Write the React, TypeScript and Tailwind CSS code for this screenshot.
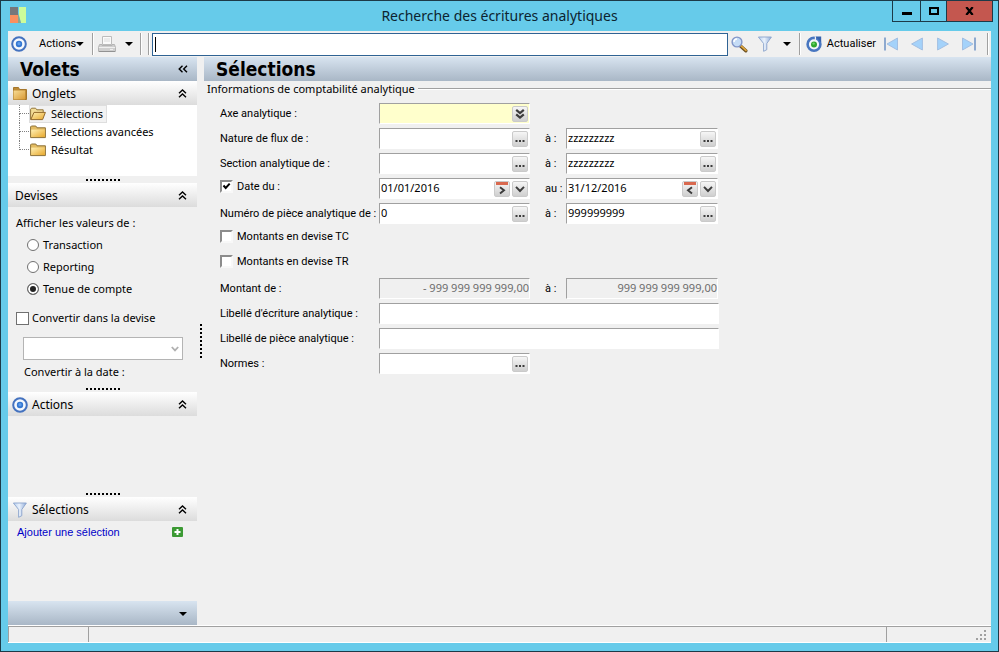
import { useState } from 'react';
import type { ReactNode } from 'react';
import clsx from 'clsx';

// --- Icons --------------------------------------------------------------------

function AppIcon() {
  return (
    <svg width="16" height="16" viewBox="0 0 16 16" aria-hidden="true">
      <rect width="8" height="8" fill="#77777b" />
      <rect y="8" width="8" height="8" fill="#fb8f5f" />
      <path d="M9 0h7v16h-5L9 8z" fill="#cdfc9a" />
      <path d="M8 6l3 10H8z" fill="#8fa58c" />
    </svg>
  );
}

function TargetIcon() {
  return (
    <svg width="16" height="16" viewBox="0 0 16 16" className="shrink-0" aria-hidden="true">
      <circle cx="8" cy="8" r="6.8" fill="#f4f8fd" stroke="#4472bf" strokeWidth="2" />
      <circle cx="8" cy="8" r="3.2" fill="#3477d2" />
      <circle cx="8" cy="7.7" r="1.6" fill="#5f9dea" />
    </svg>
  );
}

function PrinterIcon() {
  return (
    <svg width="18" height="18" viewBox="0 0 18 18" aria-hidden="true">
      <path d="M4.5 1.5h9v8h-9z" fill="#fafafa" stroke="#bcbcbc" />
      <path d="M6 4h6M6 6h6" stroke="#dcdcdc" />
      <path d="M1.5 9.5h2.5v1h10v-1h2.5l1 3v4H.5v-4z" fill="#cfcfcf" stroke="#b4b4b4" />
      <path d="M1 12.5h16" stroke="#f0f0f0" />
      <path d="M1 16.5h16" stroke="#929292" />
      <rect x="12" y="14" width="3" height="1" fill="#eee" />
    </svg>
  );
}

function SearchIcon() {
  return (
    <svg width="17" height="17" viewBox="0 0 17 17" aria-hidden="true">
      <path d="M9.5 10l5.3 4.8" stroke="#6b5022" strokeWidth="3.4" strokeLinecap="round" />
      <path d="M10 9.8l5 4.6" stroke="#e0a63c" strokeWidth="1.6" strokeLinecap="round" />
      <circle cx="6" cy="6" r="4.9" fill="#c5dcf6" stroke="#8296c8" strokeWidth="1.4" />
      <path d="M3 6a3 3 0 013-3" stroke="#fff" strokeWidth="1.5" fill="none" />
    </svg>
  );
}

function FunnelIcon() {
  return (
    <svg width="16" height="16" viewBox="0 0 16 16" className="shrink-0" aria-hidden="true">
      <defs>
        <linearGradient id="funnel" x1="0" x2="1">
          <stop offset="0" stopColor="#b4cdee" />
          <stop offset=".45" stopColor="#eaf2fc" />
          <stop offset="1" stopColor="#8fabd8" />
        </linearGradient>
      </defs>
      <path d="M1.4 1h13L9.8 7.5v6.2l-3.2 1.6V7.5z" fill="url(#funnel)" stroke="#8aa3cc" strokeWidth=".9" />
    </svg>
  );
}

function RefreshIcon() {
  return (
    <svg width="16" height="16" viewBox="0 0 16 16" aria-hidden="true">
      <circle cx="8" cy="8.3" r="6.4" fill="#f2f7fc" stroke="#4876c0" strokeWidth="2.6" />
      <path d="M9.4 0v5.6" stroke="#f0f0f0" strokeWidth="1.2" />
      <path d="M9.4 .4h5.8v5.8z" fill="#3562ad" />
      <circle cx="8" cy="8.4" r="3" fill="#2fa82f" />
      <circle cx="7.6" cy="7.6" r="1.2" fill="#6ad46a" />
    </svg>
  );
}

function NavIcon({ kind }: { kind: 'first' | 'prev' | 'next' | 'last' }) {
  const flip = kind === 'next' || kind === 'last';
  const bar = kind === 'first' || kind === 'last';
  return (
    <svg width="16" height="16" viewBox="0 0 16 16" className={clsx(flip && '-scale-x-100')} aria-hidden="true">
      {bar && <path d="M2 1.5v13" stroke="#8ea9cf" strokeWidth="2" />}
      <path
        d={bar ? 'M14.5 2v12L4 8z' : 'M13.4 2v12L2.6 8z'}
        fill="#a4d2fa"
        stroke="#a3bfe2"
      />
    </svg>
  );
}

function FolderIcon({ open = false }: { open?: boolean }) {
  return (
    <svg width="16" height="14" viewBox="0 0 16 14" className="shrink-0" aria-hidden="true">
      <defs>
        <linearGradient id="folder" x1="0" y1="0" x2="1" y2="1">
          <stop offset="0" stopColor="#fff0b4" />
          <stop offset="1" stopColor="#e8a92e" />
        </linearGradient>
      </defs>
      {open ? (
        <>
          <path d="M.6 12.5V2.2l1-1h4l1.2 1.6h6.4v2.6" fill="#f3dc96" stroke="#93763a" />
          <path d="M.8 12.6L4 5.4h11.4l-2.8 7.2z" fill="url(#folder)" stroke="#93692a" />
        </>
      ) : (
        <>
          <path d="M.6 12.6V1.8l.8-.8h4.4L7 2.8h8.4v9.8z" fill="#e3bc62" stroke="#8d7138" />
          <path d="M1.2 4.6h13.6v7.4H1.2z" fill="url(#folder)" />
        </>
      )}
    </svg>
  );
}

function SectionFolderIcon() {
  return (
    <svg width="16" height="16" viewBox="0 0 16 16" className="shrink-0" aria-hidden="true">
      <defs>
        <linearGradient id="section-folder" x1="0" y1="0" x2="1" y2="1">
          <stop offset="0" stopColor="#f7dc95" />
          <stop offset="1" stopColor="#d99a35" />
        </linearGradient>
      </defs>
      <path d="M1.5 13.5v-12h5l1 2h7v10z" fill="#bd8a35" stroke="#a5762b" />
      <path d="M1.5 4.5h11.6v9H1.5z" fill="url(#section-folder)" />
    </svg>
  );
}

function Caret() {
  return (
    <svg width="8" height="4" viewBox="0 0 8 4" aria-hidden="true">
      <path d="M0 0h8L4 4z" fill="#000" />
    </svg>
  );
}

function CollapseIcon() {
  return (
    <svg width="9" height="9" viewBox="0 0 9 9" fill="none" stroke="#000" strokeWidth="1.4" aria-hidden="true">
      <path d="M1 4.2L4.5 1 8 4.2M1 8.2L4.5 5 8 8.2" />
    </svg>
  );
}

function FieldGlyph({ kind }: { kind: FieldButton }) {
  return (
    <svg width="14" height="14" viewBox="0 0 14 14" fill="none" stroke="#3c3c3c" strokeWidth="1.9" aria-hidden="true">
      {kind === 'browse' && <path d="M2.5 9h2M6 9h2M9.5 9h2" strokeWidth="2" />}
      {kind === 'list' && <path d="M3.2 2.8L7 6l3.8-3.2M3.2 7.3L7 10.5l3.8-3.2" strokeWidth="2.2" />}
      {kind === 'drop' && <path d="M3 4.8L7 9l4-4.2" />}
      {kind === 'from' && <path d="M5 5.2L9 8.2 5 11.4" />}
      {kind === 'to' && <path d="M9 5.2L5 8.2l4 3.2" />}
      {(kind === 'from' || kind === 'to') && <path d="M1 1.5h12" stroke="#d9694f" strokeWidth="3" />}
    </svg>
  );
}

// --- Small parts --------------------------------------------------------------

type FieldButton = 'browse' | 'list' | 'drop' | 'from' | 'to';

const buttonTitles: Record<FieldButton, string> = {
  browse: 'Parcourir',
  list: 'Liste',
  drop: 'Calendrier',
  from: 'Date suivante',
  to: 'Date précédente',
};

interface FieldProps {
  id: string;
  label?: string;
  value?: string;
  buttons?: FieldButton[];
  required?: boolean;
  disabled?: boolean;
  className?: string;
}

function Field({ id, label, value = '', buttons = [], required, disabled, className }: FieldProps) {
  return (
    <div
      className={clsx(
        'flex h-[21px] min-w-0 items-center gap-[2px] border border-r-white border-b-white border-t-[#a0a0a0] border-l-[#a0a0a0]',
        buttons.length > 0 && 'pr-px',
        required ? 'bg-[#ffffcc]' : disabled ? 'bg-[#f0f0f0]' : 'bg-white',
        className,
      )}
    >
      <input
        id={id}
        type="text"
        aria-label={label}
        defaultValue={value}
        disabled={disabled}
        className={clsx(
          'h-full w-full min-w-0 flex-1 bg-transparent pb-[3px] pl-px font-["Noto_Sans",sans-serif] text-[11px] outline-none',
          disabled && 'text-right text-[#6d6d6d]',
        )}
      />
      {buttons.map(kind => (
        <button
          key={kind}
          type="button"
          title={buttonTitles[kind]}
          className="flex size-4 shrink-0 items-center justify-center rounded-[2px] border border-[#cacaca] bg-linear-to-b from-[#f6f6f6] to-[#cfcfcf]"
        >
          <FieldGlyph kind={kind} />
        </button>
      ))}
    </div>
  );
}

function FormCheck({ label, defaultChecked }: { label: string; defaultChecked?: boolean }) {
  return (
    <label className="flex items-start gap-1 pt-[2px] leading-[14px]">
      <span className="relative size-[13px] shrink-0">
        <input
          type="checkbox"
          defaultChecked={defaultChecked}
          className="peer block size-[13px] appearance-none border-2 border-t-[#8c8c8c] border-r-[#f8f8f8] border-b-[#f8f8f8] border-l-[#8c8c8c] bg-white"
        />
        <svg
          viewBox="0 0 13 13"
          className="pointer-events-none absolute inset-0 hidden peer-checked:block"
          aria-hidden="true"
        >
          <path d="M3.5 5.5L5.7 8l4-4.4" stroke="#000" strokeWidth="2" fill="none" />
        </svg>
      </span>
      {label}
    </label>
  );
}

function Dots({ vertical = false }: { vertical?: boolean }) {
  return (
    <div className={clsx('flex gap-[2px]', vertical && 'flex-col')}>
      {Array.from({ length: 9 }, (_, i) => (
        <span key={i} className="size-[2px] bg-black" />
      ))}
    </div>
  );
}

function Grip() {
  return (
    <div className="flex h-[7px] items-center justify-center">
      <Dots />
    </div>
  );
}

function PanelHeader({ title, icon }: { title: string; icon?: ReactNode }) {
  return (
    <h2 className="flex h-6 items-center bg-linear-to-b from-white to-[#dcdcdc] pt-px pl-1 pr-[10px] text-xs">
      {icon}
      <span className={clsx('flex-1', icon ? 'pl-1' : 'pl-[3px]')}>{title}</span>
      <button type="button" title="Réduire">
        <CollapseIcon />
      </button>
    </h2>
  );
}

function Separator() {
  return <div className="h-[22px] w-[2px] shrink-0 border-r border-l border-l-[#a0a0a0] border-r-white" />;
}

// --- Sidebar ------------------------------------------------------------------

const tabs = ['Sélections', 'Sélections avancées', 'Résultat'];
const currencies = ['Transaction', 'Reporting', 'Tenue de compte'];

function Sidebar() {
  const [tab, setTab] = useState(tabs[0]);
  const [currency, setCurrency] = useState('Tenue de compte');

  return (
    <aside className="flex w-[189px] shrink-0 flex-col font-['Noto_Sans',sans-serif] text-[11px]">
      <div className="flex h-6 items-center justify-between bg-linear-to-b from-[#d8e4f0] to-[#a9b7c6] pl-3 pr-[9px]">
        <h1 className="font-['DejaVu_Sans_Condensed','DejaVu_Sans',sans-serif] text-[19px] font-bold leading-6">
          Volets
        </h1>
        <button type="button" title="Masquer les volets">
          <svg width="10" height="8" viewBox="0 0 10 8" fill="none" stroke="#000" strokeWidth="1.4" aria-hidden="true">
            <path d="M4.5 .8L1.2 4l3.3 3.2M9 .8L5.7 4 9 7.2" />
          </svg>
        </button>
      </div>

      <PanelHeader title="Onglets" icon={<SectionFolderIcon />} />
      <ul className="bg-white pb-[17px] pl-[11px]">
        {tabs.map((t, i) => (
          <li key={t} className="flex h-[18px]">
            <span className="flex w-[10px] flex-col">
              <span className="h-[9px] border-b border-l border-dotted border-[#808080]" />
              <span className={clsx('h-[9px]', i < tabs.length - 1 && 'border-l border-dotted border-[#808080]')} />
            </span>
            <button
              type="button"
              onClick={() => setTab(t)}
              className={clsx(
                'flex items-center gap-[5px] border pr-[3px] leading-4',
                t === tab ? 'border-[#dedede] bg-[#f2f2f2]' : 'border-transparent',
              )}
            >
              <FolderIcon open={t === tab} />
              {t}
            </button>
          </li>
        ))}
      </ul>
      <Grip />

      <PanelHeader title="Devises" />
      <div className="flex flex-col pt-[7px] pb-1 pl-2 leading-[18px]">
        <p>Afficher les valeurs de :</p>
        <div className="mt-1 flex flex-col gap-1 pl-[11px]">
          {currencies.map(c => (
            <label key={c} className="flex items-center gap-1">
              <input
                type="radio"
                name="currency"
                checked={currency === c}
                onChange={() => setCurrency(c)}
                className="size-3 appearance-none rounded-full border border-[#707070] bg-white checked:bg-[#222] checked:shadow-[inset_0_0_0_2px_#fff]"
              />
              {c}
            </label>
          ))}
        </div>
        <label className="mt-[11px] flex items-center gap-[3px]">
          <input type="checkbox" className="size-[13px] appearance-none border border-[#707070] bg-white checked:bg-[#444]" />
          Convertir dans la devise
        </label>
        <div className="relative mt-[10px] mr-[14px] ml-[7px]">
          <select
            disabled
            aria-label="Devise de conversion"
            className="block h-[23px] w-full appearance-none border border-[#b4b4b4] bg-white"
          />
          <svg
            width="8"
            height="6"
            viewBox="0 0 8 6"
            className="pointer-events-none absolute top-[9px] right-1"
            aria-hidden="true"
          >
            <path d="M.8 1L4 4.4 7.2 1" stroke="#b0b0b0" strokeWidth="1.8" fill="none" />
          </svg>
        </div>
        <p className="mt-[3px] pl-2">Convertir à la date :</p>
      </div>
      <Grip />

      <PanelHeader title="Actions" icon={<TargetIcon />} />
      <div className="h-[74px]" />
      <Grip />

      <PanelHeader title="Sélections" icon={<FunnelIcon />} />
      <div className="flex h-[22px] items-center justify-between pl-[9px] pr-[14px]">
        <a href="#selection" className="font-['Liberation_Sans',Arial,sans-serif] text-[11px] text-[#0000c8]">
          Ajouter une sélection
        </a>
        <button type="button" title="Ajouter">
          <svg width="11" height="10" viewBox="0 0 11 10" aria-hidden="true">
            <rect width="11" height="10" rx="1" fill="#3c9a34" />
            <path d="M5.5 2v6M2.5 5h6" stroke="#fff" strokeWidth="2" />
          </svg>
        </button>
      </div>

      <div className="mt-auto flex h-6 items-center justify-end bg-linear-to-b from-[#d8e4f0] to-[#a9b7c6] pt-[2px] pr-[10px]">
        <button type="button" title="Plus de volets">
          <Caret />
        </button>
      </div>
    </aside>
  );
}

// --- Selection form -----------------------------------------------------------

function SelectionForm() {
  return (
    <form className="grid grid-cols-[159px_151px_36px_152px_1px] gap-y-[3px] pl-4 font-[Roboto,sans-serif] text-[11px] leading-[22px]">
      <label htmlFor="axe">Axe analytique :</label>
      <Field id="axe" required buttons={['list']} />

      <label htmlFor="flux-de" className="col-start-1">Nature de flux de :</label>
      <Field id="flux-de" buttons={['browse']} />
      <label htmlFor="flux-a" className="pl-[15px]">à :</label>
      <Field id="flux-a" value="zzzzzzzzz" buttons={['browse']} />

      <label htmlFor="section-de" className="col-start-1">Section analytique de :</label>
      <Field id="section-de" buttons={['browse']} />
      <label htmlFor="section-a" className="pl-[15px]">à :</label>
      <Field id="section-a" value="zzzzzzzzz" buttons={['browse']} />

      <div className="col-start-1">
        <FormCheck label="Date du :" defaultChecked />
      </div>
      <Field id="date-du" label="Date du" value="01/01/2016" buttons={['from', 'drop']} />
      <label htmlFor="date-au" className="pl-[15px]">au :</label>
      <Field id="date-au" value="31/12/2016" buttons={['to', 'drop']} />

      <label htmlFor="piece-de" className="col-start-1 whitespace-nowrap">Numéro de pièce analytique de :</label>
      <Field id="piece-de" value="0" buttons={['browse']} />
      <label htmlFor="piece-a" className="pl-[15px]">à :</label>
      <Field id="piece-a" value="999999999" buttons={['browse']} />

      <div className="col-span-full h-[22px]">
        <FormCheck label="Montants en devise TC" />
      </div>
      <div className="col-span-full h-[22px]">
        <FormCheck label="Montants en devise TR" />
      </div>

      <label htmlFor="montant-de" className="col-start-1">Montant de :</label>
      <Field id="montant-de" value="- 999 999 999 999,00" disabled />
      <label htmlFor="montant-a" className="pl-[15px]">à :</label>
      <Field id="montant-a" value="999 999 999 999,00" disabled />

      <label htmlFor="libelle-ecriture" className="col-start-1">Libellé d'écriture analytique :</label>
      <Field id="libelle-ecriture" className="col-span-4" />
      <label htmlFor="libelle-piece" className="col-start-1">Libellé de pièce analytique :</label>
      <Field id="libelle-piece" className="col-span-4" />

      <label htmlFor="normes" className="col-start-1">Normes :</label>
      <Field id="normes" buttons={['browse']} />
    </form>
  );
}

// --- Window -------------------------------------------------------------------

function TitleBar() {
  return (
    <header className="relative flex h-[30px] items-start justify-between pl-[9px] pr-[5px]">
      <span className="pt-[6px]">
        <AppIcon />
      </span>
      <div className="absolute inset-x-0 top-0 text-center font-['Noto_Sans',sans-serif] text-sm leading-[29px] text-[#0c2430]">
        Recherche des écritures analytiques
      </div>
      <div className="relative flex h-[21px] divide-x divide-[#1c3a48] border-x border-b border-[#1c3a48]">
        <button type="button" title="Réduire" className="flex w-7 items-center justify-center">
          <span className="mt-1 h-[3px] w-[10px] bg-black" />
        </button>
        <button type="button" title="Agrandir" className="flex w-[26px] items-center justify-center">
          <span className="h-2 w-[10px] border-2 border-black" />
        </button>
        <button type="button" title="Fermer" className="flex w-[45px] items-center justify-center bg-[#c4574f]">
          <svg width="9" height="8" viewBox="0 0 9 8" aria-hidden="true">
            <path d="M1.3 0l6.4 8M7.7 0L1.3 8" stroke="#000" strokeWidth="2.2" />
          </svg>
        </button>
      </div>
    </header>
  );
}

function Toolbar() {
  return (
    <div className="flex h-[26px] items-center pl-[3px] pr-[2px] font-[Roboto,sans-serif] text-[11px]">
      <TargetIcon />
      <button type="button" className="mr-2 ml-3 flex w-[45px] items-center justify-between">
        Actions <Caret />
      </button>
      <Separator />
      <button type="button" title="Imprimer" className="ml-1">
        <PrinterIcon />
      </button>
      <button type="button" title="Options d'impression" className="mr-[7px] ml-[9px] flex h-4 items-center">
        <Caret />
      </button>
      <Separator />
      <span className="w-[6px]" />
      <Separator />
      <div className="relative ml-[2px] flex min-w-0 flex-1">
        <input
          type="text"
          aria-label="Rechercher"
          autoFocus
          className="peer h-[23px] w-full min-w-0 border border-[#2f6394] bg-white px-[2px] caret-transparent outline-none"
        />
        <span className="pointer-events-none absolute top-1 left-[3px] h-[15px] w-px bg-black" />
      </div>
      <button type="button" title="Rechercher" className="ml-[3px]">
        <SearchIcon />
      </button>
      <button type="button" title="Filtrer" className="ml-[9px]">
        <FunnelIcon />
      </button>
      <button type="button" title="Options du filtre" className="mr-2 ml-[10px] flex h-4 items-center">
        <Caret />
      </button>
      <Separator />
      <button type="button" className="mr-[7px] ml-[5px] flex items-center gap-[5px]">
        <RefreshIcon /> Actualiser
      </button>
      <div className="flex gap-[10px]">
        <button type="button" title="Premier"><NavIcon kind="first" /></button>
        <button type="button" title="Précédent"><NavIcon kind="prev" /></button>
        <button type="button" title="Suivant"><NavIcon kind="next" /></button>
        <button type="button" title="Dernier"><NavIcon kind="last" /></button>
      </div>
      <span className="w-[10px]" />
      <Separator />
    </div>
  );
}

function StatusBar() {
  return (
    <footer className="flex h-[18px] border-y border-white">
      <div className="w-20 border-t border-l border-[#a0a0a0]" />
      <div className="flex-1 border-t border-l border-[#a0a0a0]" />
      <div className="flex w-[105px] items-end justify-end border-t border-l border-[#a0a0a0] pr-1 pb-px">
        <svg width="11" height="11" viewBox="0 0 11 11" fill="#a0a0a0" aria-hidden="true">
          <path d="M8 0h2v2H8zM4 4h2v2H4zM8 4h2v2H8zM0 8h2v2H0zM4 8h2v2H4zM8 8h2v2H8z" />
        </svg>
      </div>
    </footer>
  );
}

export default function App() {
  return (
    <div className="flex min-h-screen flex-col border border-[#1c3a48] bg-[#66cbea] text-black">
      <TitleBar />
      <div className="mx-[7px] mb-2 flex flex-1 flex-col bg-[#f0f0f0]">
        <Toolbar />
        <div className="flex flex-1">
          <Sidebar />
          <div className="flex w-[7px] shrink-0 items-center justify-center">
            <Dots vertical />
          </div>
          <main className="min-w-0 flex-1">
            <h1 className="h-6 bg-linear-to-b from-[#d8e4f0] to-[#a9b7c6] pl-3 font-['DejaVu_Sans_Condensed','DejaVu_Sans',sans-serif] text-[19px] font-bold leading-6">
              Sélections
            </h1>
            <div className="mb-[6px] flex items-center gap-[3px] pl-[3px]">
              <h2 className="font-['Noto_Sans',sans-serif] text-[11px] leading-4">
                Informations de comptabilité analytique
              </h2>
              <span className="h-[2px] flex-1 border-t border-b border-t-[#a0a0a0] border-b-white" />
            </div>
            <SelectionForm />
          </main>
        </div>
        <StatusBar />
      </div>
    </div>
  );
}
